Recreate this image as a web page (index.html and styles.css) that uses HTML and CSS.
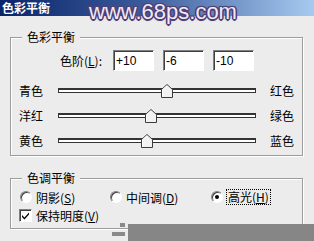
FILE: index.html
```html
<!DOCTYPE html>
<html lang="zh-CN">
<head>
    <meta charset="UTF-8">
    <title>色彩平衡</title>
    <link rel="stylesheet" href="styles.css">
</head>
<body>
    <div class="dialog">
        <div class="titlebar">
            <span class="title">色彩平衡</span>
            <span class="watermark">www.68ps.com</span>
        </div>

        <!-- Color balance group -->
        <fieldset class="group balance">
            <legend>色彩平衡</legend>
            <div class="levels">
                <span class="levels-label">色阶(<u>L</u>):</span>
                <input class="level" type="text" value="+10">
                <input class="level" type="text" value="-6">
                <input class="level" type="text" value="-10">
            </div>
            <div class="slider-row first">
                <span class="left">青色</span>
                <div class="track">
                    <svg class="thumb" style="left:102px" width="12" height="14" viewBox="0 0 12 14"><path d="M0.5 5.5 L6 0.5 L11.5 5.5 V13.5 H0.5 Z" fill="#f2f2f2" stroke="#3c3c3c"/><path d="M1.5 12.5 V6 L6 1.9" fill="none" stroke="#fff"/></svg>
                </div>
                <span class="right">红色</span>
            </div>
            <div class="slider-row">
                <span class="left">洋红</span>
                <div class="track">
                    <svg class="thumb" style="left:86px" width="12" height="14" viewBox="0 0 12 14"><path d="M0.5 5.5 L6 0.5 L11.5 5.5 V13.5 H0.5 Z" fill="#f2f2f2" stroke="#3c3c3c"/><path d="M1.5 12.5 V6 L6 1.9" fill="none" stroke="#fff"/></svg>
                </div>
                <span class="right">绿色</span>
            </div>
            <div class="slider-row">
                <span class="left">黄色</span>
                <div class="track">
                    <svg class="thumb" style="left:82px" width="12" height="14" viewBox="0 0 12 14"><path d="M0.5 5.5 L6 0.5 L11.5 5.5 V13.5 H0.5 Z" fill="#f2f2f2" stroke="#3c3c3c"/><path d="M1.5 12.5 V6 L6 1.9" fill="none" stroke="#fff"/></svg>
                </div>
                <span class="right">蓝色</span>
            </div>
        </fieldset>

        <!-- Tone balance group -->
        <fieldset class="group tone">
            <legend>色调平衡</legend>
            <div class="radios">
                <label class="option shadows"><span class="radio"></span>阴影(<u>S</u>)</label>
                <label class="option midtones"><span class="radio"></span>中间调(<u>D</u>)</label>
                <label class="option highlights"><span class="radio checked"></span><span class="focus">高光(<u>H</u>)</span></label>
            </div>
            <label class="check-row">
                <span class="checkbox"><svg width="9" height="9" viewBox="0 0 9 9"><path d="M1 4 L3.5 6.5 L8 1.5 V3.5 L3.5 8.5 L1 6 Z" fill="#000"/></svg></span>保持明度(<u>V</u>)
            </label>
        </fieldset>

        <!-- cut off part of the screenshot -->
        <div class="grip grip-top"></div>
        <div class="grip grip-bottom"></div>
        <div class="cutoff"></div>
    </div>
</body>
</html>
```

FILE: styles.css
```css
body {
    margin: 0;
    background-color: #ececec;
    color: #000;
    font-family: "Noto Sans CJK SC", "Liberation Sans", sans-serif;
    font-size: 12px;
}
.dialog {
    position: relative;
    width: 314px;
    height: 241px;
    overflow: hidden;
}
.titlebar {
    position: relative;
    height: 16px;
    background: linear-gradient(to right, #0a246a 0%, #3a5a9a 45%, #a6caf0 100%);
}
.title {
    display: block;
    padding-left: 2px;
    line-height: 16px;
    color: #fff;
    font-weight: bold;
}
.watermark {
    position: absolute;
    left: 89px;
    top: -3px;
    z-index: 2;
    font-family: "Liberation Sans", Arial, sans-serif;
    font-size: 22px;
    line-height: 30px;
    color: #efeaf8;
    text-shadow:
        1.5px 0 0 #4e3f74, -1.5px 0 0 #4e3f74,
        0 1.5px 0 #4e3f74, 0 -1.5px 0 #4e3f74,
        1px 1px 0 #4e3f74, -1px -1px 0 #4e3f74,
        1px -1px 0 #4e3f74, -1px 1px 0 #4e3f74,
        0 0 3px #6a5a90;
}
/* Group boxes */
.group {
    box-sizing: border-box;
    width: 293px;
    min-width: 0;
    margin: 14px 0 0 10px;
    padding: 6px 8px 2px;
    border: 1px solid #9c9c9c;
    box-shadow: inset 1px 1px 0 #fff, 1px 1px 0 #fff;
}
.group legend {
    margin-left: 3px;
    padding: 0 5px;
    line-height: 14px;
    background-color: #ececec;
}
.tone {
    margin-top: 15px;
    padding: 3px 8px 4px;
}
.levels {
    display: flex;
    align-items: center;
    height: 21px;
    padding-left: 41px;
}
.levels-label {
    width: 53px;
}
.level {
    box-sizing: border-box;
    width: 41px;
    height: 21px;
    margin: 0 9px 0 0;
    padding: 0 2px;
    border: 1px solid;
    border-color: #808080 #fff #fff #808080;
    box-shadow: inset 1px 1px 0 #404040;
    background-color: #fff;
    font-family: "Liberation Sans", Arial, sans-serif;
    font-size: 12px;
    color: #000;
}
/* Sliders */
.slider-row {
    display: flex;
    align-items: center;
    height: 25px;
}
.slider-row.first {
    margin-top: 7px;
}
.slider-row .left {
    width: 39px;
}
.slider-row .right {
    margin-left: 14px;
}
.track {
    position: relative;
    box-sizing: border-box;
    width: 198px;
    height: 5px;
    border: 1px solid #333;
    border-top-width: 2px;
    background-color: #fff;
}
.thumb {
    position: absolute;
    top: -6px;
    display: block;
}
/* Radios and checkbox */
.radios {
    display: flex;
    align-items: center;
    height: 18px;
}
.option {
    display: flex;
    align-items: center;
}
.shadows {
    width: 90px;
    margin-left: 1px;
}
.midtones {
    width: 101px;
}
.radio {
    position: relative;
    box-sizing: border-box;
    width: 12px;
    height: 12px;
    margin-right: 4px;
    border: 1px solid;
    border-color: #808080 #fff #fff #808080;
    border-radius: 50%;
    box-shadow: inset 1px 1px 0 #404040;
    background-color: #fff;
}
.radio.checked::after {
    content: "";
    position: absolute;
    left: 3px;
    top: 3px;
    width: 4px;
    height: 4px;
    border-radius: 50%;
    background-color: #000;
}
.focus {
    padding: 0 1px;
    line-height: 14px;
    outline: 1px dotted #000;
}
.check-row {
    display: flex;
    align-items: center;
    height: 18px;
}
.checkbox {
    box-sizing: border-box;
    display: flex;
    align-items: center;
    justify-content: center;
    width: 13px;
    height: 13px;
    margin-right: 4px;
    border: 1px solid;
    border-color: #808080 #fff #fff #808080;
    box-shadow: inset 1px 1px 0 #404040;
    background-color: #fff;
}
/* Cut off corner of the screenshot */
.cutoff {
    position: absolute;
    left: 128px;
    top: 224px;
    width: 186px;
    height: 17px;
    background-color: #868686;
}
.grip {
    position: absolute;
    height: 4px;
    background-image: radial-gradient(circle, #8a8a8a 0.8px, transparent 1px);
    background-size: 2px 2px;
}
.grip-top {
    left: 120px;
    top: 223px;
    width: 5px;
}
.grip-bottom {
    left: 112px;
    top: 232px;
    width: 13px;
}
```
